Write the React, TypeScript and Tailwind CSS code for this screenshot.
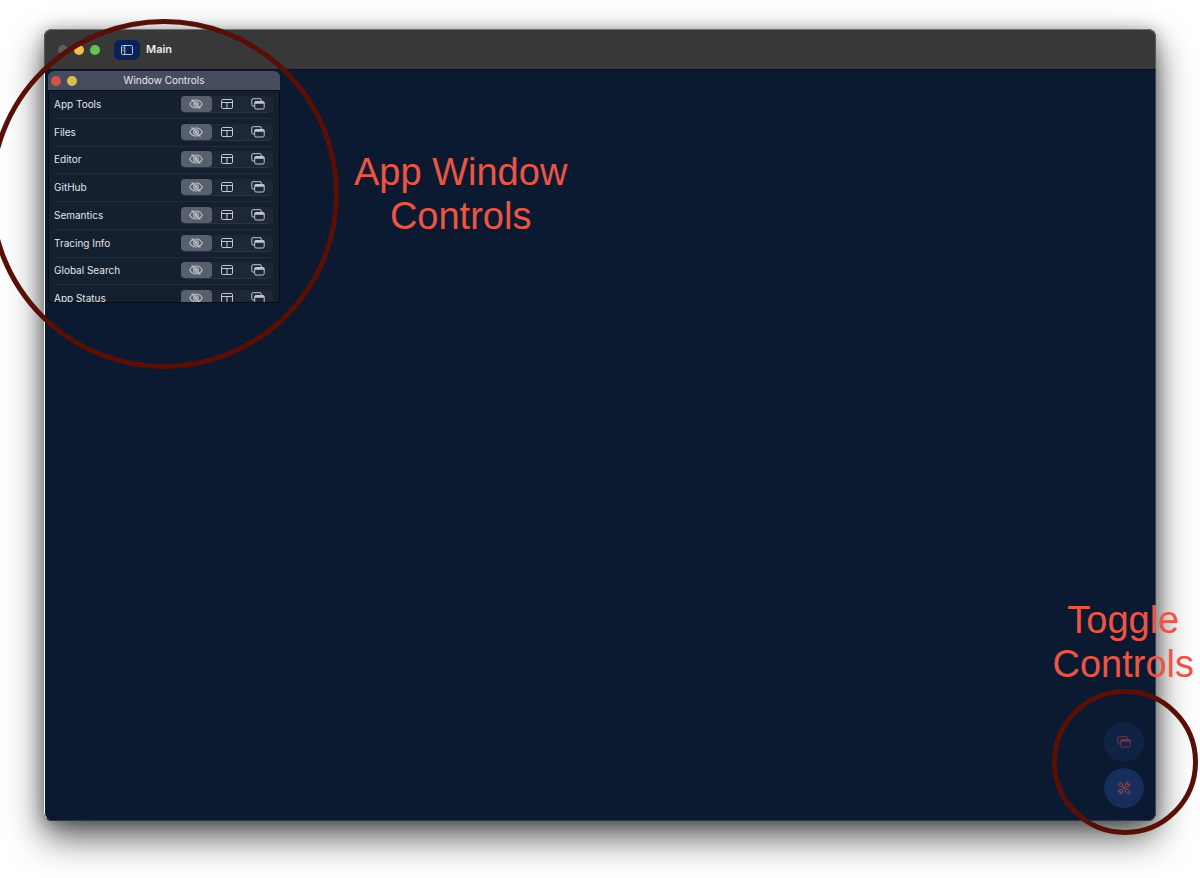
import { useState } from "react";
import type { ReactNode } from "react";

type Mode = "hidden" | "docked" | "floating";

const panels = [
  "App Tools",
  "Files",
  "Editor",
  "GitHub",
  "Semantics",
  "Tracing Info",
  "Global Search",
  "App Status",
];

function EyeSlashIcon() {
  return (
    <svg viewBox="0 0 14 10" className="h-[10px] w-[14px]" fill="none" stroke="currentColor" strokeWidth="1.1" strokeLinecap="round" aria-hidden="true">
      <path d="M0.7 5C2 2.4 4.3 1 7 1S12 2.400 13.300 5C12 7.600 9.700 9 7 9S2 7.600 0.700 5Z" />
      <circle cx="7" cy="5" r="2.300" />
      <circle cx="7" cy="5" r="0.600" />
      <path d="M3 0.600L11 9.400" strokeWidth="1.200" />
    </svg>
  );
}

function LayoutIcon() {
  return (
    <svg viewBox="0 0 14 12" className="h-3 w-[14px]" fill="none" stroke="currentColor" strokeWidth="1" aria-hidden="true">
      <rect x="1.500" y="1.500" width="11" height="9" rx="1.300" />
      <path d="M1.500 4.500H12.500M7 4.500V10.500" />
    </svg>
  );
}

function WindowsIcon() {
  return (
    <svg viewBox="0 0 14 12" className="h-3 w-[14px]" fill="none" stroke="currentColor" strokeWidth="1" aria-hidden="true">
      <path d="M3.500 8H2A1.200 1.200 0 0 1 0.800 6.800V2A1.300 1.300 0 0 1 2.100 0.700H9A1.300 1.300 0 0 1 10.300 2V3" />
      <rect x="3.700" y="3.500" width="9.500" height="7.500" rx="1.300" />
      <path d="M3.700 4.700H13.200" strokeWidth="2" />
    </svg>
  );
}

function SidebarIcon() {
  return (
    <svg viewBox="0 0 14 12" className="h-3 w-[14px]" fill="none" stroke="currentColor" strokeWidth="0.9" aria-hidden="true">
      <rect x="1.500" y="1.500" width="11" height="9" rx="1.200" />
      <path d="M4.800 1.500V10.500" />
      <path d="M2.600 3.500H3.700M2.600 5H3.700M2.600 6.500H3.700" strokeWidth="0.700" />
    </svg>
  );
}

function ToolsIcon() {
  return (
    <svg viewBox="0 0 14 14" className="size-[14px]" fill="none" stroke="currentColor" strokeWidth="1" strokeLinejoin="round" strokeLinecap="round" aria-hidden="true">
      <path d="M1.500 2.600L2.800 1.300L5 2.800L5.200 4.300L9 8L10 7.900L12.600 10.600A1.300 1.300 0 0 1 10.700 12.600L8 9.900L8.100 8.900L4.300 5.100L2.900 4.900Z" />
      <path d="M7.600 5.200L8.400 4.400C7.900 2.500 9.300 0.900 11.200 1.200L9.900 2.700L11.300 4.100L12.900 2.800C13.200 4.800 11.500 6.200 9.600 5.600L8.800 6.400M6.300 8.900L5.500 9.700C6 11.600 4.600 13 2.700 12.700L4 11.300L2.700 10L1.200 11.200C0.900 9.300 2.500 7.900 4.300 8.500L5.200 7.600" />
    </svg>
  );
}

const modes: { id: Mode; label: string; icon: ReactNode }[] = [
  { id: "hidden", label: "Hidden", icon: <EyeSlashIcon /> },
  { id: "docked", label: "Docked", icon: <LayoutIcon /> },
  { id: "floating", label: "Floating", icon: <WindowsIcon /> },
];

function PanelRow({ name }: { name: string }) {
  const [mode, setMode] = useState<Mode>("hidden");
  return (
    <li className="flex items-center justify-between border-b border-[#222c3d]">
      <span>{name}</span>
      <div role="group" aria-label={name} className="flex h-[17px] w-[92px] rounded-[5px] border-b border-[#2a3446] bg-[#1d2738]">
        {modes.map((m) => (
          <button
            key={m.id}
            type="button"
            aria-label={m.label}
            aria-pressed={mode === m.id}
            onClick={() => setMode(m.id)}
            className={
              mode === m.id
                ? "flex flex-1 items-center justify-center rounded-[4px] bg-[#59606d] text-[#b9bec6]"
                : "flex flex-1 items-center justify-center text-[#c3c7ce]"
            }
          >
            {m.icon}
          </button>
        ))}
      </div>
    </li>
  );
}

function WindowControls() {
  return (
    <section className="flex h-[232px] w-[232px] flex-col overflow-hidden rounded-t-[6px] rounded-b-[3px] text-[10px] text-[#e4e7eb]">
      <header className="flex h-[19px] shrink-0 items-center bg-[#464c5d] px-[3px]">
        <div className="flex flex-1 gap-[6px]">
          <button type="button" aria-label="Close" className="size-[10px] rounded-full bg-[#d15247]" />
          <button type="button" aria-label="Minimize" className="size-[10px] rounded-full bg-[#d9bd48]" />
        </div>
        <h2>Window Controls</h2>
        <div className="flex-1" />
      </header>
      <div className="flex-1 overflow-hidden rounded-b-[3px] border border-[#060d18] bg-[#141f30] pr-[6px] pl-[5px]">
        <ul className="grid h-[222px] auto-rows-fr">
          {panels.map((name) => (
            <PanelRow key={name} name={name} />
          ))}
        </ul>
      </div>
    </section>
  );
}

export default function App() {
  return (
    <div className="relative flex min-h-screen flex-col overflow-hidden bg-white px-11 pt-[29px] pb-[57px] font-[Inter,'Liberation_Sans',sans-serif]">
      <div className="flex flex-1 flex-col overflow-hidden rounded-[8px] bg-[#0b1a30] shadow-[0_16px_36px_rgba(0,0,0,0.65),0_2px_16px_rgba(0,0,0,0.3)]">
        <header className="flex h-[41px] shrink-0 items-center rounded-t-[8px] border border-x-[#5a5c5b] border-t-[#6f7371] border-b-[#0a1220] bg-[#383838] pl-[13px]">
          <div className="flex gap-[6px]">
            <button type="button" aria-label="Close" className="size-[10px] rounded-full bg-[#5d5d5d]" />
            <button type="button" aria-label="Minimize" className="size-[10px] rounded-full bg-[#f5bd4c]" />
            <button type="button" aria-label="Zoom" className="size-[10px] rounded-full bg-[#61c554]" />
          </div>
          <button type="button" aria-label="Toggle sidebar" className="ml-[14px] flex h-5 w-[26px] items-center justify-center rounded-[6px] bg-[#08225a] text-[#d5dae5]">
            <SidebarIcon />
          </button>
          <h1 className="ml-[6px] text-[11px] font-semibold text-[#ececec]">Main</h1>
        </header>
        <main className="flex flex-1 flex-col items-start justify-between rounded-b-[8px] border-r border-b border-l border-r-[#3a4658] border-b-[#2a3649] border-l-white pt-px pl-[3px]">
          <WindowControls />
          <div className="mr-[11px] mb-3 flex flex-col gap-[6px] self-end">
            <button type="button" aria-label="Toggle windows" className="flex size-10 items-center justify-center rounded-full bg-[#102344] text-[#723744]">
              <WindowsIcon />
            </button>
            <button type="button" aria-label="Toggle tools" className="flex size-10 items-center justify-center rounded-full bg-[#162e59] text-[#a5484d]">
              <ToolsIcon />
            </button>
          </div>
        </main>
      </div>

      <div className="pointer-events-none absolute top-[19px] left-[-11px] size-[350px] rounded-full border-[5px] border-[#570f06]" />
      <p className="absolute top-[150px] left-[354px] text-center font-['Liberation_Sans',sans-serif] text-[38px] leading-[44px] text-[#eb5545]">
        App Window
        <br />
        Controls
      </p>
      <div className="pointer-events-none absolute right-[2px] bottom-[43px] size-[146px] rounded-full border-[5px] border-[#570f06]" />
      <p className="absolute right-[6px] bottom-[192px] text-center font-['Liberation_Sans',sans-serif] text-[38px] leading-[44px] text-[#eb5545]">
        Toggle
        <br />
        Controls
      </p>
    </div>
  );
}
